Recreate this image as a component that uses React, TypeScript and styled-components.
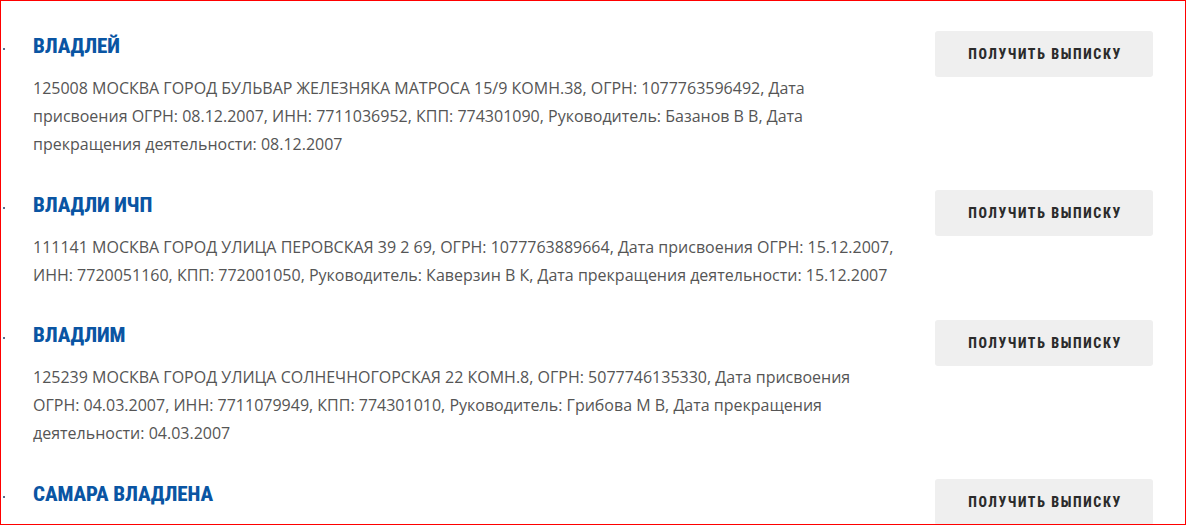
import styled, { createGlobalStyle } from 'styled-components';

const GlobalStyle = createGlobalStyle`
  html, body {
    margin: 0;
    padding: 0;
    background: #ffffff;
  }
  * {
    box-sizing: border-box;
  }
`;

const Frame = styled.div`
  width: 1186px;
  height: 525px;
  border: 1px solid #ff0000;
  overflow: hidden;
  padding: 30px 32px 0 32px;
  background: #ffffff;
`;

const List = styled.ul`
  list-style: none;
  margin: 0;
  padding: 0;
  display: flex;
  flex-direction: column;
  gap: 31.5px;
`;

const Row = styled.li`
  position: relative;
  display: flex;
  align-items: flex-start;
  justify-content: space-between;

  &::before {
    content: '';
    position: absolute;
    left: -30px;
    top: 17px;
    width: 2px;
    height: 2px;
    background: #5a6f8c;
  }
`;

const Info = styled.div`
  flex: 0 1 862px;
`;

const Title = styled.a`
  display: block;
  font-family: 'Roboto Condensed', 'Liberation Sans Narrow', Roboto, sans-serif;
  font-weight: 800;
  font-size: 21px;
  line-height: 30px;
  letter-spacing: -0.1px;
  color: #0a55a3;
  text-transform: uppercase;
  text-decoration: none;
  margin-bottom: 13px;
`;

const Details = styled.p`
  margin: 0;
  font-family: 'Open Sans', 'Liberation Sans', sans-serif;
  font-size: 16px;
  line-height: 28px;
  color: #555555;
`;

const Button = styled.button`
  flex: 0 0 218px;
  height: 46px;
  border: none;
  border-radius: 3px;
  background: #efefef;
  font-family: 'Roboto Condensed', 'Liberation Sans Narrow', Roboto, sans-serif;
  font-weight: 800;
  font-size: 14px;
  letter-spacing: 1.6px;
  color: #2b2b2b;
  cursor: pointer;
  padding: 0 0 0 2px;
`;

const companies = [
  {
    name: 'Владлей',
    text: '125008 МОСКВА ГОРОД БУЛЬВАР ЖЕЛЕЗНЯКА МАТРОСА 15/9 КОМН.38, ОГРН: 1077763596492, Дата присвоения ОГРН: 08.12.2007, ИНН: 7711036952, КПП: 774301090, Руководитель: Базанов В В, Дата прекращения деятельности: 08.12.2007',
  },
  {
    name: 'Владли ИЧП',
    text: '111141 МОСКВА ГОРОД УЛИЦА ПЕРОВСКАЯ 39 2 69, ОГРН: 1077763889664, Дата присвоения ОГРН: 15.12.2007, ИНН: 7720051160, КПП: 772001050, Руководитель: Каверзин В К, Дата прекращения деятельности: 15.12.2007',
  },
  {
    name: 'Владлим',
    text: '125239 МОСКВА ГОРОД УЛИЦА СОЛНЕЧНОГОРСКАЯ 22 КОМН.8, ОГРН: 5077746135330, Дата присвоения ОГРН: 04.03.2007, ИНН: 7711079949, КПП: 774301010, Руководитель: Грибова М В, Дата прекращения деятельности: 04.03.2007',
  },
  {
    name: 'Самара Владлена',
    text: '',
  },
];

const App: React.FC = () => {
  return (
    <>
      <GlobalStyle />
      <Frame>
        <List>
          {companies.map((c) => (
            <Row key={c.name}>
              <Info>
                <Title href="#">{c.name}</Title>
                {c.text && <Details>{c.text}</Details>}
              </Info>
              <Button>ПОЛУЧИТЬ ВЫПИСКУ</Button>
            </Row>
          ))}
        </List>
      </Frame>
    </>
  );
};

export default App;
